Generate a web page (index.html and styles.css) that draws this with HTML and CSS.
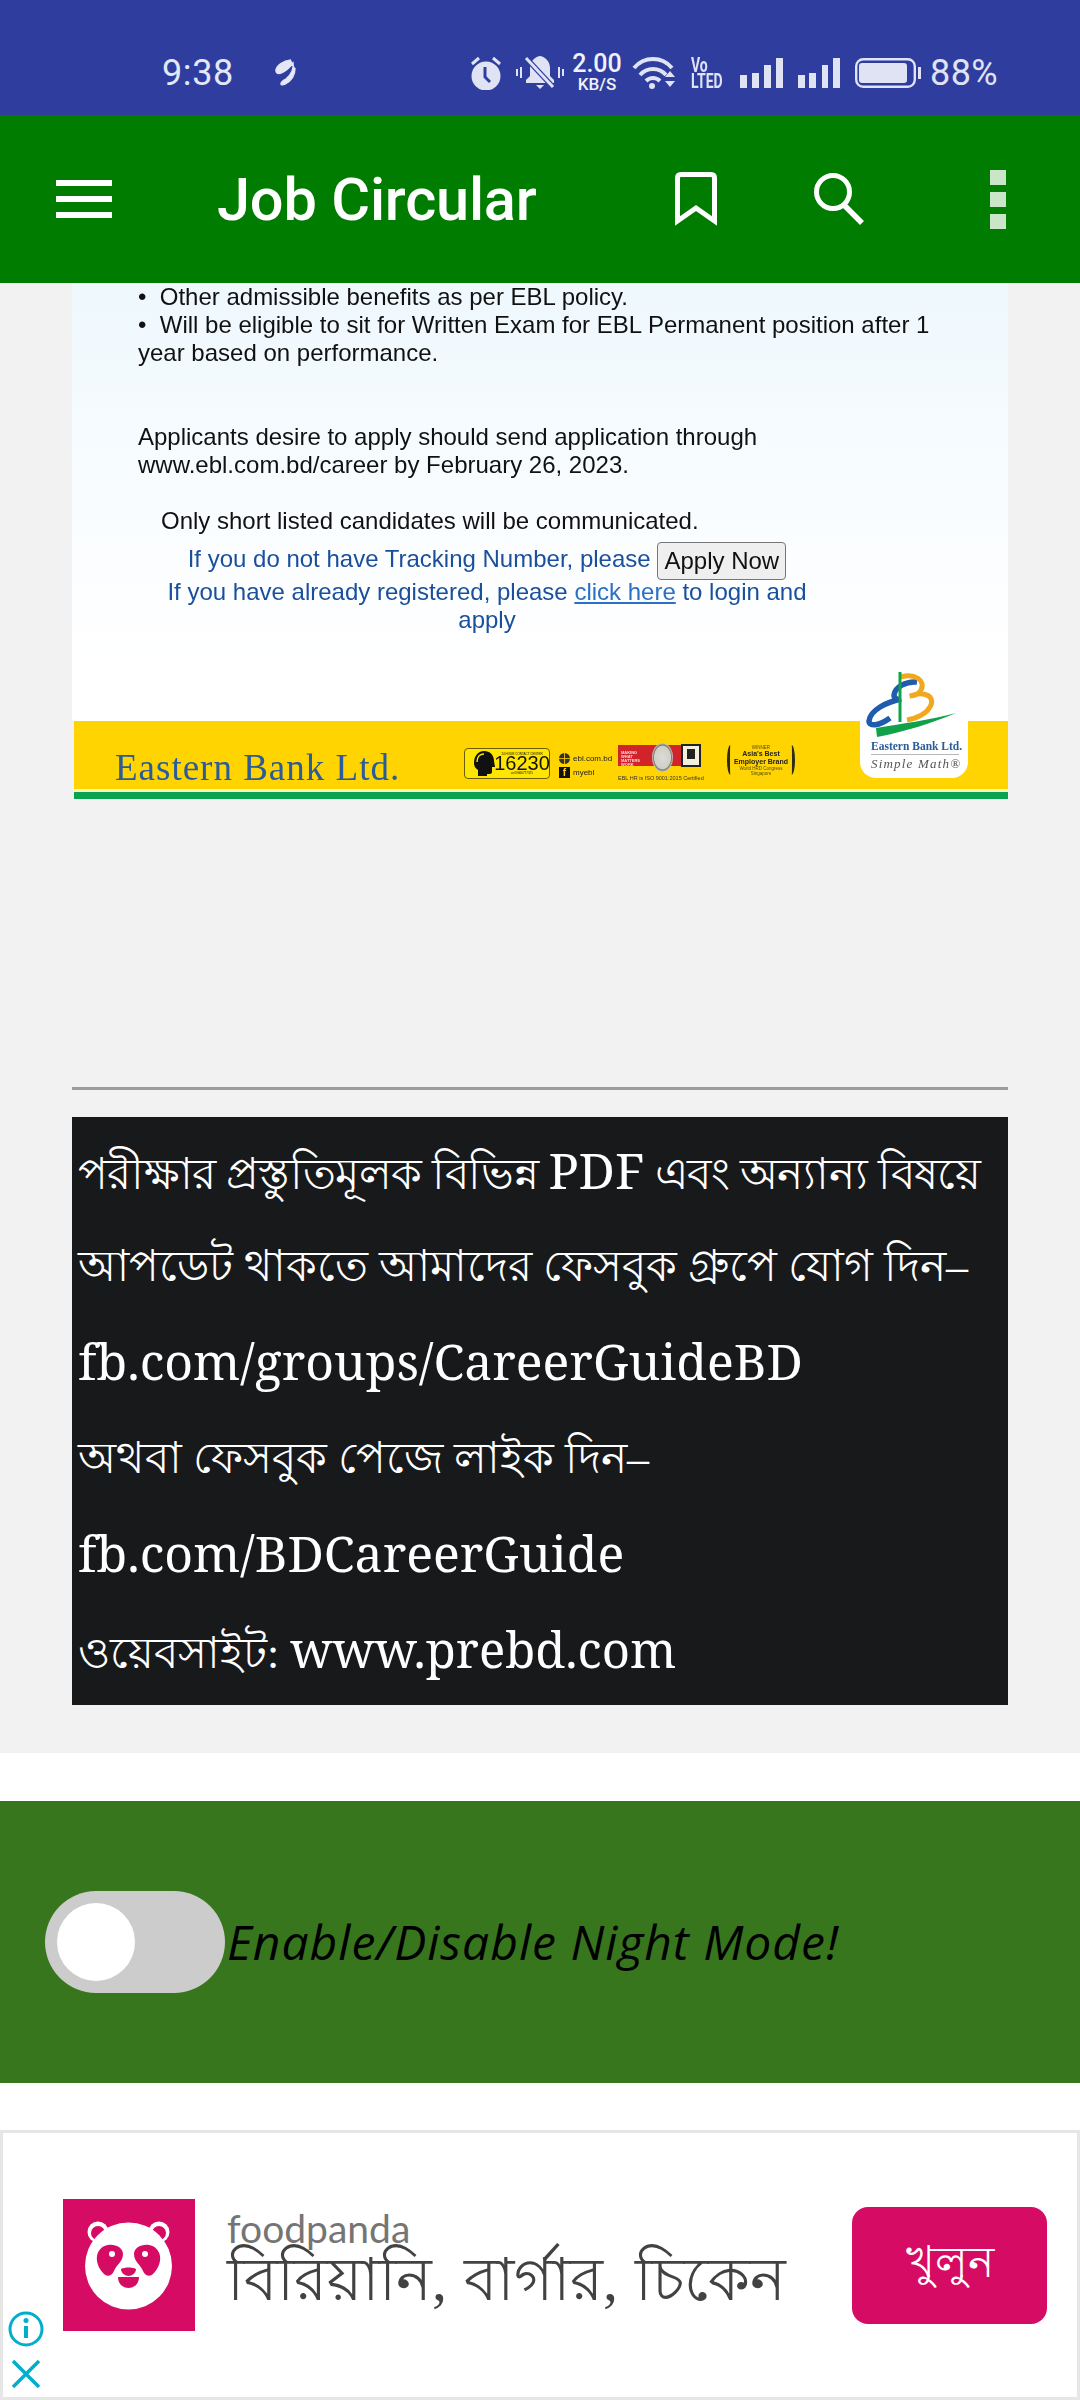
FILE: index.html
```html
<!DOCTYPE html>
<html lang="bn">
<head>
<meta charset="utf-8">
<title>Job Circular</title>
<link rel="stylesheet" href="styles.css">
</head>
<body>
<div class="status">
  <span class="time">9:38</span>
  <svg class="swirl" width="27" height="27" viewBox="0 0 27 27"><path d="M21 1C13 2 7 6 6 11c-.5 3 2 4 5 3 5-2 9-6 12-10 1 6-2 12-7 16-3 2-5 3-5 5 0 1 2 1 4 0 6-3 10-9 10-16" fill="#e3e7f6" stroke="#e3e7f6" stroke-width="1.500"/></svg>
  <div class="tray">
    <svg width="30" height="34" viewBox="0 0 30 34"><circle cx="15" cy="20" r="14.500" fill="#dfe3f4"/><path d="M14 11v10l5 5" fill="none" stroke="#303f9f" stroke-width="3"/><path d="M1 8l7-6M29 8l-7-6" stroke="#dfe3f4" stroke-width="3"/></svg>
    <svg width="48" height="33" viewBox="0 0 48 33"><path d="M24 0c-6 1-10 6-10 12v8l-4 4v3h28v-3l-4-4v-8c0-6-4-11-10-12z" fill="#dfe3f4"/><path d="M20 29h8l-4 4z" fill="#dfe3f4"/><path d="M10 2l27 29" stroke="#303f9f" stroke-width="5.500"/><path d="M10 2l27 29" stroke="#dfe3f4" stroke-width="3"/><path d="M1 13v7M5 11v11M43 11v11M47 13v7" stroke="#dfe3f4" stroke-width="2"/></svg>
    <div class="speed"><span class="speed-num">2.00</span><span class="speed-unit">KB/S</span></div>
    <svg width="44" height="33" viewBox="0 0 44 33"><path d="M2 12C12 0 30 0 40 12" fill="none" stroke="#dfe3f4" stroke-width="4"/><path d="M8 19c7-8 19-8 26 0" fill="none" stroke="#dfe3f4" stroke-width="4"/><path d="M14 25c4-4 10-4 14 0" fill="none" stroke="#dfe3f4" stroke-width="4"/><circle cx="20" cy="30" r="3" fill="#dfe3f4"/><path d="M33 21h10l-5-6zM33 25h10l-5 6z" fill="#dfe3f4"/></svg>
    <div class="volte"><span class="volte-line">Vo</span><span class="volte-line">LTED</span></div>
    <svg width="43" height="30" viewBox="0 0 43 30"><path d="M0 17h7v13H0zM12 15h7v15h-7zM24 7h7v23h-7zM36 0h7v30h-7z" fill="#dfe3f4"/></svg>
    <svg width="42" height="30" viewBox="0 0 42 30"><path d="M0 17h7v13H0zM11 15h7v15h-7zM24 7h6v23h-6zM35 0h7v30h-7z" fill="#dfe3f4"/></svg>
    <svg width="66" height="30" viewBox="0 0 66 30"><rect x="1.200" y="1.200" width="58.600" height="27.600" rx="7" fill="none" stroke="#dfe3f4" stroke-width="2.400"/><rect x="4" y="5" width="48" height="20" rx="3" fill="#dfe3f4"/><rect x="63" y="9" width="3" height="12" fill="#dfe3f4"/></svg>
    <span class="pct">88%</span>
  </div>
</div>

<header class="toolbar">
  <div class="menu"><i></i><i></i><i></i></div>
  <h1 class="title">Job Circular</h1>
  <svg class="bookmark" width="42" height="54" viewBox="0 0 42 54"><path d="M2.500 6q0-3.500 3.500-3.500h30q3.500 0 3.500 3.500v43L21 36 2.500 49z" fill="none" stroke="#fff" stroke-width="5"/></svg>
  <svg class="search" width="52" height="52" viewBox="0 0 52 52"><circle cx="20" cy="19" r="16.500" fill="none" stroke="#fff" stroke-width="5"/><path d="M31 32l18 18" stroke="#fff" stroke-width="5.500"/></svg>
  <div class="dots"><i></i><i></i><i></i></div>
</header>

<main class="content">
  <section class="banner">
    <div class="notice">
      <p class="para">•&nbsp;&nbsp;Other admissible benefits as per EBL policy.<br>•&nbsp;&nbsp;Will be eligible to sit for Written Exam for EBL Permanent position after 1<br>year based on performance.</p>
      <p class="para para-apply">Applicants desire to apply should send application through<br>www.ebl.com.bd/career by February 26, 2023.</p>
      <p class="para para-only">Only short listed candidates will be communicated.</p>
      <div class="apply">
        <div class="apply-row">If you do not have Tracking Number, please <button class="apply-btn">Apply Now</button></div>
        <div>If you have already registered, please <a class="apply-link">click here</a> to login and<br>apply</div>
      </div>
    </div>
    <div class="band">
      <span class="bank-name">Eastern Bank Ltd.</span>
      <div class="hotline">
        <svg class="head" width="23" height="25" viewBox="0 0 23 25"><path d="M2 12C2 4 7 0 12 0c6 0 10 4 10 10l1 6h-3v5c0 2-2 2-5 2v2H6v-6c-3-2-4-4-4-7z" fill="#111"/><path d="M5 11c0-5 3-8 7-8" fill="none" stroke="#ffe600" stroke-width="1.500"/></svg>
        <div class="hotline-text"><small class="tiny">24 HOUR CONTACT CENTER</small><b class="hotline-num">16230</b><small class="tiny">or 09666777325</small></div>
      </div>
      <div class="social">
        <div class="social-row"><svg width="11" height="11" viewBox="0 0 11 11"><circle cx="5.500" cy="5.500" r="5.500" fill="#333"/><path d="M0 5.500h11M5.500 0v11" stroke="#ffd400" stroke-width=".8"/></svg><span>ebl.com.bd</span></div>
        <div class="social-row"><span class="fb">f</span><span>myebl</span></div>
      </div>
      <div class="iso">
        <div class="iso-top">
          <div class="iso-red"><small class="iso-red-text">MAKING WHAT MATTERS WORK</small></div>
          <div class="iso-seal"></div>
          <div class="iso-box"><i class="iso-mark"></i></div>
        </div>
        <small class="iso-cap">EBL HR is ISO 9001:2015 Certified</small>
      </div>
      <div class="award">
        <i class="laurel laurel-l"></i>
        <div class="award-text"><small class="award-small">WINNER</small><b>Asia's Best</b><b>Employer Brand</b><small class="award-small">World HRD Congress</small><small class="award-small">Singapore</small></div>
        <i class="laurel laurel-r"></i>
      </div>
    </div>
    <div class="band-rule"></div>
    <div class="logo-card">
      <svg width="108" height="62" viewBox="0 0 108 62">
        <path d="M57 14C46 13 35 19 34 27c0 4 4 5 7 4C27 34 10 42 9 53c0 6 10 5 21-3" fill="none" stroke="#1f5cae" stroke-width="5.500"/>
        <path d="M41 9c13-4 25 3 20 13-3 5-8 6-11 6 15-6 26 1 20 11-4 7-13 11-23 13" fill="none" stroke="#f2a81d" stroke-width="5"/>
        <path d="M40 4v50" stroke="#12a14b" stroke-width="3"/>
        <path d="M16 60C40 56 70 52 96 45 72 55 44 64 17 69z" fill="#12a14b"/>
      </svg>
      <div class="logo-name">Eastern Bank Ltd.</div>
      <div class="logo-tag">Simple Math®</div>
    </div>
  </section>

  <hr class="rule">

  <section class="promo">
    <p class="promo-line bn bn-tight">পরীক্ষার প্রস্তুতিমূলক বিভিন্ন <span class="lat">PDF</span> এবং অন্যান্য বিষয়ে</p>
    <p class="promo-line bn">আপডেট থাকতে আমাদের ফেসবুক গ্রুপে যোগ দিন–</p>
    <p class="promo-line lat">fb.com/groups/CareerGuideBD</p>
    <p class="promo-line bn">অথবা ফেসবুক পেজে লাইক দিন–</p>
    <p class="promo-line lat">fb.com/BDCareerGuide</p>
    <p class="promo-line bn bn-last">ওয়েবসাইট: <span class="lat lat-site">www.prebd.com</span></p>
  </section>
</main>

<div class="gap-top"></div>

<section class="night">
  <div class="switch"><span class="knob"></span></div>
  <span class="night-label">Enable/Disable Night Mode!</span>
</section>

<div class="gap-bottom"></div>

<aside class="ad">
  <svg class="ad-logo" width="132" height="132" viewBox="0 0 132 132">
    <rect width="132" height="132" fill="#d60b63"/>
    <circle cx="35" cy="33" r="10.500" fill="#fff"/><circle cx="96" cy="33" r="10.500" fill="#fff"/>
    <circle cx="35" cy="34" r="7" fill="#d60b63"/><circle cx="96" cy="34" r="7" fill="#d60b63"/>
    <circle cx="65.500" cy="67" r="43.500" fill="#fff"/>
    <path d="M45 46c8-1 15 3 15 9 0 8-7 11-9 17-2 5-7 6-10 3-5-5-8-12-7-18 1-6 5-10 11-11z" fill="#d60b63"/>
    <path d="M86 46c-8-1-15 3-15 9 0 8 7 11 9 17 2 5 7 6 10 3 5-5 8-12 7-18-1-6-5-10-11-11z" fill="#d60b63"/>
    <circle cx="49" cy="55" r="3" fill="#fff"/><circle cx="82" cy="55" r="3" fill="#fff"/>
    <path d="M58 70c4-2 11-2 15 0 0 4-4 7-7.500 7S58 74 58 70z" fill="#d60b63"/>
    <path d="M55 78h21c0 7-5 11-10.500 11S55 85 55 78z" fill="#d60b63"/>
  </svg>
  <div class="ad-text">
    <div class="ad-brand">foodpanda</div>
    <div class="ad-head">বিরিয়ানি, বার্গার, চিকেন</div>
  </div>
  <button class="ad-btn">খুলুন</button>
  <svg class="ad-info" width="36" height="36" viewBox="0 0 36 36"><circle cx="18" cy="18" r="16" fill="none" stroke="#00aecd" stroke-width="3"/><path d="M18 15v12" stroke="#00aecd" stroke-width="4"/><circle cx="18" cy="9.500" r="2.500" fill="#00aecd"/></svg>
  <svg class="ad-close" width="30" height="28" viewBox="0 0 30 28"><path d="M2 1l26 26M28 1L2 27" stroke="#00aecd" stroke-width="3.500"/></svg>
</aside>
</body>
</html>
```
FILE: styles.css
```css
* { box-sizing: border-box; }
html, body { margin: 0; padding: 0; }
body { width: 1080px; height: 2400px; overflow: hidden; background: #fff; font-family: Roboto, "Noto Sans", sans-serif; }
p { margin: 0; }

/* status bar */
.status { height: 115px; padding: 30px 0 0 162px; background: #2f3e9e; display: flex; align-items: center; color: #e3e7f6; }
.time { font-size: 36px; line-height: 40px; width: 74px; letter-spacing: .6px; }
.swirl { margin-left: 34px; }
.tray { margin-left: 174px; display: flex; align-items: center; gap: 15px; }
.speed { display: flex; flex-direction: column; align-items: center; width: 50px; margin: 0 -5px 0 -7px; font-weight: 500; color: #f0f2fb; }
.speed-num { font-size: 25px; line-height: 24px; }
.speed-unit { font-size: 17px; line-height: 17px; }
.volte { width: 34px; display: flex; flex-direction: column; }
.volte-line { font: 700 20px/16px Roboto, sans-serif; color: #dfe3f4; transform: scaleX(.7); transform-origin: left center; white-space: nowrap; }
.pct { font-size: 36px; line-height: 40px; margin-left: -6px; color: #dfe3f4; letter-spacing: .4px; }

/* toolbar */
.toolbar { height: 168px; background: #007d00; display: flex; align-items: center; padding-left: 56px; }
.menu { width: 56px; display: flex; flex-direction: column; gap: 10px; }
.menu i { display: block; height: 6px; background: #fff; }
.title { margin: 2px 0 0 105px; width: 320px; font-size: 59.500px; line-height: 66px; font-weight: 500; letter-spacing: -.2px; color: #fff; white-space: nowrap; }
.bookmark { margin-left: 138px; }
.search { margin-left: 96px; }
.dots { margin-left: 125px; display: flex; flex-direction: column; gap: 7px; }
.dots i { display: block; width: 16px; height: 15px; background: #c9e6c9; }

/* content */
.content { height: 1470px; padding: 0 72px; background: #f2f2f2; }
.banner { position: relative; height: 516px; filter: blur(.35px); }
.notice { height: 438px; padding: 0 40px 0 66px; background: linear-gradient(#eef8fd, #fbfdff 60%, #fff 88%); font: 24px/28px "Liberation Sans", Arial, sans-serif; color: #111; }
.para-apply { margin-top: 56px; }
.para-only { margin-top: 28px; padding-left: 23px; }
.apply { margin: 4px 132px 0 0; text-align: center; color: #1a4f9c; }
.apply-row { height: 39px; line-height: 39px; }
.apply-btn { width: 129px; height: 38px; padding: 0; font: 24px "Liberation Sans", Arial, sans-serif; color: #111; background: #efefef; border: 1px solid #767676; border-radius: 4px; vertical-align: middle; }
.apply-link { color: #2b70c4; text-decoration: underline; }

.band { margin-left: 2px; height: 68px; background: #ffd400; display: flex; position: relative; }
.band-rule { margin-left: 2px; height: 10px; background: #0ca34f; border-top: 3px solid #fbf3c0; }
.bank-name { margin: 28px 0 0 41px; width: 349px; font: 37px/38px "Liberation Serif", serif; letter-spacing: 1px; color: #2a5b9a; white-space: nowrap; }

.hotline { margin-top: 27px; width: 86px; height: 31px; display: flex; align-items: center; gap: 2px; padding-left: 7px; background: #ffe600; border: 1px solid #6b5c00; border-radius: 4px; }
.hotline-text { display: flex; flex-direction: column; align-items: center; color: #111; width: 50px; }
.hotline-num { font: 400 20px/15px "Liberation Sans", sans-serif; }
.tiny { font: 3px/4px "Liberation Sans", sans-serif; white-space: nowrap; }

.social { margin: 32px 0 0 9px; width: 59px; font: 8px/11px "Liberation Sans", sans-serif; color: #222; display: flex; flex-direction: column; gap: 3px; }
.social-row { display: flex; align-items: center; gap: 3px; }
.fb { width: 11px; height: 11px; background: #111; color: #ffd400; font: 700 10px/12px "Liberation Sans", sans-serif; text-align: center; }

.iso { margin-top: 23px; width: 83px; display: flex; flex-direction: column; }
.iso-top { height: 24px; display: flex; position: relative; }
.iso-red { width: 63px; height: 21px; margin-top: 1px; background: #d2232a; padding: 6px 0 0 3px; }
.iso-red-text { display: block; width: 22px; font: 700 4px/4px "Liberation Sans", sans-serif; color: #f6d8d8; }
.iso-seal { position: absolute; left: 34px; top: -1px; width: 21px; height: 29px; border-radius: 50%; background: radial-gradient(#dcdcd4, #cfcfc8 55%, #7d7d74 60%, #e9e9e0 75%); }
.iso-box { width: 20px; height: 23px; background: #f2efdc; border: 2px solid #222; padding: 3px 4px; }
.iso-mark { display: block; height: 10px; background: #222; }
.iso-cap { margin-top: 7px; font: 5.500px/7px "Liberation Sans", sans-serif; color: #333; white-space: nowrap; }

.award { margin: 24px 0 0 26px; width: 68px; height: 32px; display: flex; justify-content: space-between; }
.laurel { display: block; width: 7px; height: 30px; border: 3px solid #2b2b1a; }
.laurel-l { border-width: 0 0 0 3px; border-radius: 100% 0 0 100%; }
.laurel-r { border-width: 0 3px 0 0; border-radius: 0 100% 100% 0; }
.award-text { display: flex; flex-direction: column; align-items: center; font: 700 7px/8px "Liberation Sans", sans-serif; color: #222; white-space: nowrap; }
.award-small { font: 4.500px/5px "Liberation Sans", sans-serif; color: #554a10; }

.logo-card { position: absolute; left: 788px; top: 385px; width: 108px; height: 110px; background: #fff; border-radius: 0 0 16px 16px; }
.logo-card svg { display: block; overflow: visible; }
.logo-name { position: absolute; left: 11px; top: 70px; width: 88px; font: 700 11.500px/16px "Liberation Serif", serif; color: #2a5b9a; white-space: nowrap; border-bottom: 1px solid #b9b9b9; }
.logo-tag { position: absolute; left: 11px; top: 88px; font: italic 13px/16px "Liberation Serif", serif; letter-spacing: 1.200px; color: #555; white-space: nowrap; }

.rule { margin: 288px 0 0; height: 3px; border: 0; background: #9c9c9c; }

.promo { margin-top: 27px; height: 588px; padding: 4px 6px 0; background: #18191b; color: #fff; }
.promo-line { height: 96px; line-height: 96px; white-space: nowrap; }
.bn { font-family: "Liberation Serif", serif; font-size: 44px; padding-top: 2px; }
.bn-tight { letter-spacing: -.6px; padding-top: 1px; }
.bn-last { padding-top: 0; }
.lat { font-family: "Noto Serif", "DejaVu Serif", serif; font-size: 50px; letter-spacing: 0; padding-top: 0; }
.lat-site { font-size: 49px; }

.gap-top { height: 48px; }

/* night mode */
.night { height: 282px; background: #38761d; display: flex; align-items: center; padding-left: 45px; }
.switch { width: 180px; height: 102px; padding: 12px; border-radius: 51px; background: #ccc; flex: none; }
.knob { display: block; width: 78px; height: 78px; border-radius: 50%; background: #fff; }
.night-label { margin-left: 2px; font: italic 48px/60px "Open Sans", sans-serif; letter-spacing: 1px; color: #000; white-space: nowrap; }

.gap-bottom { height: 47px; }

/* ad */
.ad { position: relative; height: 270px; border: 3px solid #e6e6e6; background: #fff; display: flex; align-items: center; padding-left: 60px; }
.ad-logo { flex: none; }
.ad-text { margin: -2px 0 0 32px; width: 625px; color: #424242; }
.ad-brand { font: 39px/32px Lato, sans-serif; color: #757575; }
.ad-head { font: 60px/72px "Liberation Serif", serif; word-spacing: 2px; color: #424242; white-space: nowrap; }
.ad-btn { width: 195px; height: 117px; border: 0; border-radius: 16px; background: #d60b63; color: #fff; font: 44px "Liberation Serif", serif; padding: 0; }
.ad-info { position: absolute; left: 5px; bottom: 50px; }
.ad-close { position: absolute; left: 8px; bottom: 9px; }
```
